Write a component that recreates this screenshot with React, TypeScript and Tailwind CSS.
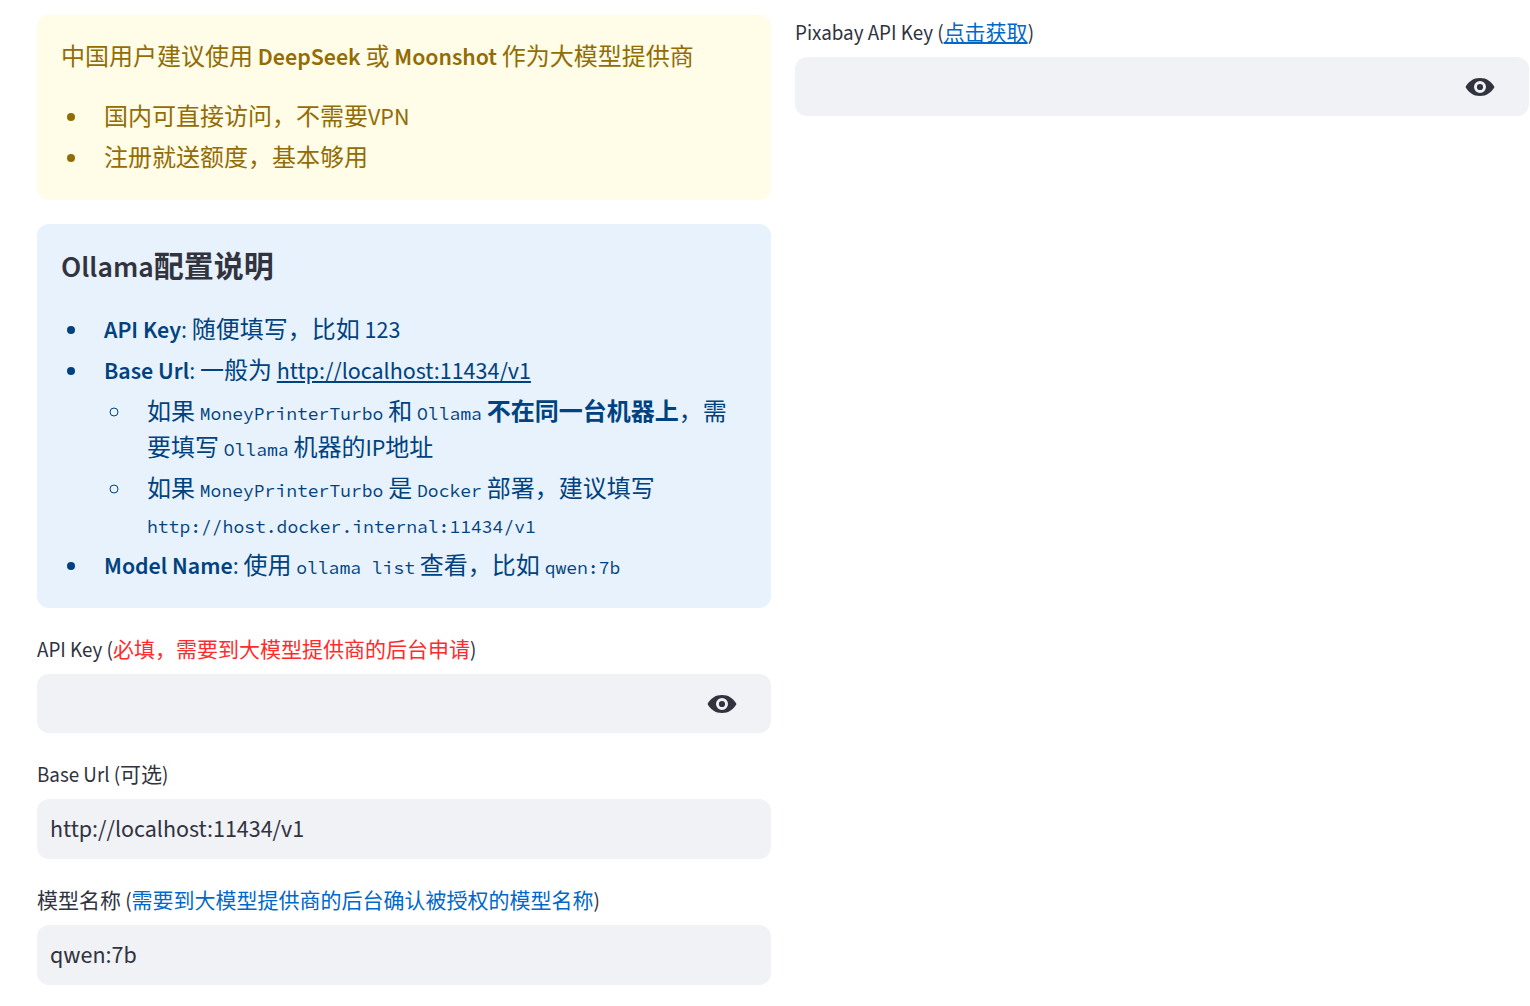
import { useState, type ReactNode } from 'react'
import clsx from 'clsx'

function Code({ children }: { children: ReactNode }) {
  return <code className="font-['Source_Code_Pro','Liberation_Mono',monospace] text-[18px] leading-none">{children}</code>
}

function Item({ children }: { children: ReactNode }) {
  return <li className="ml-[29px] pl-[14px]">{children}</li>
}

function EyeIcon() {
  return (
    <svg viewBox="0 0 30 18" className="h-[18px] w-[30px]" fill="currentColor" aria-hidden="true">
      <path
        fillRule="evenodd"
        d="M15 0C8.4 0 3.6 3.4.5 9C3.6 14.6 8.4 18 15 18S26.4 14.6 29.5 9C26.4 3.4 21.6 0 15 0ZM15 15a6 6 0 1 1 0-12a6 6 0 0 1 0 12Z"
      />
      <circle cx="15" cy="9" r="3.1" />
    </svg>
  )
}

type FieldProps = {
  id: string
  label: ReactNode
  value?: string
  secret?: boolean
}

function Field({ id, label, value = '', secret }: FieldProps) {
  const [text, setText] = useState(value)
  const [visible, setVisible] = useState(false)

  return (
    <div>
      <label htmlFor={id} className="mb-1.5 block text-[21px] leading-9">
        {label}
      </label>
      <div className={clsx('flex items-center rounded-xl bg-[#f0f2f6]', secret ? 'h-[59px]' : 'h-[60px]')}>
        <input
          id={id}
          type={secret && !visible ? 'password' : 'text'}
          value={text}
          onChange={(e) => setText(e.target.value)}
          className="h-full min-w-0 flex-1 bg-transparent px-[13px] text-2xl outline-none"
        />
        {secret && (
          <button
            type="button"
            aria-label="Show password text"
            onClick={() => setVisible(!visible)}
            className="mr-[34px] shrink-0"
          >
            <EyeIcon />
          </button>
        )}
      </div>
    </div>
  )
}

export default function App() {
  return (
    <main
      lang="zh-CN"
      className="grid grid-cols-2 items-start gap-6 pt-[15px] pr-px pb-5 pl-[37px] font-['Source_Sans_Pro','Source_Sans_3','Noto_Sans_CJK_SC',sans-serif] text-[#31333f]"
    >
      <div className="flex flex-col gap-6">
        <section className="rounded-xl bg-[#fffce7] px-6 pt-[25px] pb-[23px] text-2xl leading-9 text-[#926c05]">
          <p className="mb-6">
            中国用户建议使用 <strong className="font-semibold">DeepSeek</strong> 或{' '}
            <strong className="font-semibold">Moonshot</strong> 作为大模型提供商
          </p>
          <ul className="list-disc space-y-[5px]">
            <Item>国内可直接访问，不需要VPN</Item>
            <Item>注册就送额度，基本够用</Item>
          </ul>
        </section>

        <section className="rounded-xl bg-[#e8f2fc] px-6 pt-[25px] pb-[23px] text-2xl leading-9 text-[#004280]">
          <h4 className="mb-[26px] text-[30px] leading-[38px] font-semibold text-[#31333f]">Ollama配置说明</h4>
          <ul className="list-disc space-y-[5px]">
            <Item>
              <strong className="font-semibold">API Key</strong>: 随便填写，比如 123
            </Item>
            <Item>
              <strong className="font-semibold">Base Url</strong>: 一般为{' '}
              <a href="http://localhost:11434/v1" className="underline">
                http://localhost:11434/v1
              </a>
              <ul className="mt-[5px] list-[circle] space-y-[5px]">
                <Item>
                  如果 <Code>MoneyPrinterTurbo</Code> 和 <Code>Ollama</Code>{' '}
                  <strong className="font-semibold">不在同一台机器上</strong>，需要填写 <Code>Ollama</Code> 机器的IP地址
                </Item>
                <Item>
                  如果 <Code>MoneyPrinterTurbo</Code> 是 <Code>Docker</Code> 部署，建议填写{' '}
                  <Code>http://host.docker.internal:11434/v1</Code>
                </Item>
              </ul>
            </Item>
            <Item>
              <strong className="font-semibold">Model Name</strong>: 使用 <Code>ollama list</Code> 查看，比如{' '}
              <Code>qwen:7b</Code>
            </Item>
          </ul>
        </section>

        <Field
          id="api-key"
          secret
          label={
            <>
              API Key (<span className="text-[#ff2b2b]">必填，需要到大模型提供商的后台申请</span>)
            </>
          }
        />
        <Field id="base-url" value="http://localhost:11434/v1" label="Base Url (可选)" />
        <Field
          id="model-name"
          value="qwen:7b"
          label={
            <>
              模型名称 (<span className="text-[#0068c9]">需要到大模型提供商的后台确认被授权的模型名称</span>)
            </>
          }
        />
      </div>

      <Field
        id="pixabay-key"
        secret
        label={
          <>
            Pixabay API Key (
            <a href="https://pixabay.com/api/docs/" className="text-[#0068c9] underline">
              点击获取
            </a>
            )
          </>
        }
      />
    </main>
  )
}
